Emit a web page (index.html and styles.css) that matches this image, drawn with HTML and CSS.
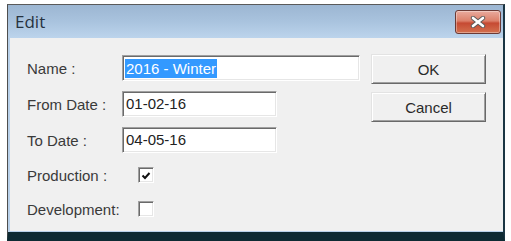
FILE: index.html
```html
<!DOCTYPE html>
<html lang='en'>
  <head>
    <meta charset='utf-8'>
    <meta name='viewport' content='width=device-width,initial-scale=1'>
    <title>Edit</title>
    <link rel="stylesheet" href="styles.css">
  </head>

  <body>
    <div class="window">
      <div class="titlebar">
        <span class="title">Edit</span>
        <button class="close" aria-label="Close">
          <svg width="16" height="12" viewBox="0 0 16 12">
            <path d="M3 2 L13 10 M13 2 L3 10" stroke="#5a5a5a" stroke-width="4.4" stroke-linecap="round"/>
            <path d="M3 2 L13 10 M13 2 L3 10" stroke="#fff" stroke-width="2.6" stroke-linecap="round"/>
          </svg>
        </button>
      </div>

      <div class="client">
        <div class="fields">
          <div class="row">
            <label>Name :</label>
            <div class="field wide"><span class="sel">2016 - Winter</span></div>
          </div>
          <div class="row">
            <label>From Date :</label>
            <div class="field">01-02-16</div>
          </div>
          <div class="row">
            <label>To Date :</label>
            <div class="field">04-05-16</div>
          </div>
          <div class="row check-row">
            <label>Production :</label>
            <span class="check">
              <svg width="10" height="9" viewBox="0 0 10 9">
                <path d="M1.5 4.5 L4 7 L8.5 2" stroke="#111" stroke-width="2" fill="none"/>
              </svg>
            </span>
          </div>
          <div class="row check-row">
            <label>Development:</label>
            <span class="check"></span>
          </div>
        </div>

        <div class="buttons">
          <button class="btn">OK</button>
          <button class="btn">Cancel</button>
        </div>
      </div>
    </div>
  </body>
</html>
```

FILE: styles.css
```css
/* reset/general */
* { box-sizing: border-box; }
body { margin: 0; background: #fff; font-family: "Liberation Sans", Arial, sans-serif; font-size: 15px; color: #3a3a3a; }

/* window frame */
.window {
  margin: 4px 0 0 7px;
  width: 498px;
  height: 237px;
  background: #b9d1ea;
  border-top: 1px solid #5a5a5a;
  border-left: 1px solid #4e4e4e;
  border-right: 2px solid #1b3644;
  border-bottom: 9px solid #0e2a33;
  display: flex;
  flex-direction: column;
}
.titlebar {
  height: 33px;
  display: flex;
  align-items: flex-start;
  justify-content: space-between;
  background: linear-gradient(#9cb6d2, #a9c3de 50%, #bcd4ec);
  padding: 5px 2px 0 7px;
}
.title { font-family: "Open Sans", sans-serif; font-size: 17px; color: #263240; line-height: 24px; }
.close {
  width: 46px;
  height: 24px;
  padding: 0;
  border: 1px solid #6b3a35;
  border-radius: 3px;
  background: linear-gradient(#e9ab9e, #dc806a 45%, #c64a33 55%, #d3714f);
  box-shadow: inset 0 0 0 1px rgba(255,255,255,.35);
  display: flex;
  align-items: center;
  justify-content: center;
}

/* dialog body */
.client {
  flex: 1;
  margin: 0 0 1px 2px;
  background: #f0f0f0;
  display: flex;
  padding: 17px 0 0 17px;
}
.fields { display: flex; flex-direction: column; gap: 10px; width: 333px; }
.row { display: flex; align-items: center; height: 26px; }
.row label { width: 95px; }
.check-row { height: 24px; }

.field {
  width: 155px;
  height: 26px;
  background: #fff;
  border: 1px solid;
  border-color: #a0a0a0 #fff #fff #a0a0a0;
  box-shadow: inset 1px 1px 0 #6a6a6a, inset -1px -1px 0 #e6e6e6;
  padding: 3px 0 0 3px;
  color: #222;
  white-space: nowrap;
}
.field.wide { width: 238px; }
.sel { background: #3399ff; color: #fff; display: inline-block; line-height: 19px; padding: 0 1px; margin-left: -1px; }

.check {
  margin-left: 16px;
  width: 16px;
  height: 16px;
  background: #fff;
  border: 1px solid;
  border-color: #a0a0a0 #fff #fff #a0a0a0;
  box-shadow: inset 1px 1px 0 #6a6a6a, inset -1px -1px 0 #e6e6e6;
  display: flex;
  align-items: center;
  justify-content: center;
}

/* buttons */
.buttons { display: flex; flex-direction: column; gap: 8px; margin: -1px 0 0 11px; }
.btn {
  width: 115px;
  height: 30px;
  font: inherit;
  color: #2a2a2a;
  background: #f0f0f0;
  border: 1px solid;
  border-color: #e3e3e3 #696969 #696969 #e3e3e3;
  box-shadow: inset 1px 1px 0 #fff, inset -1px -1px 0 #a0a0a0;
  padding: 0;
}
```
